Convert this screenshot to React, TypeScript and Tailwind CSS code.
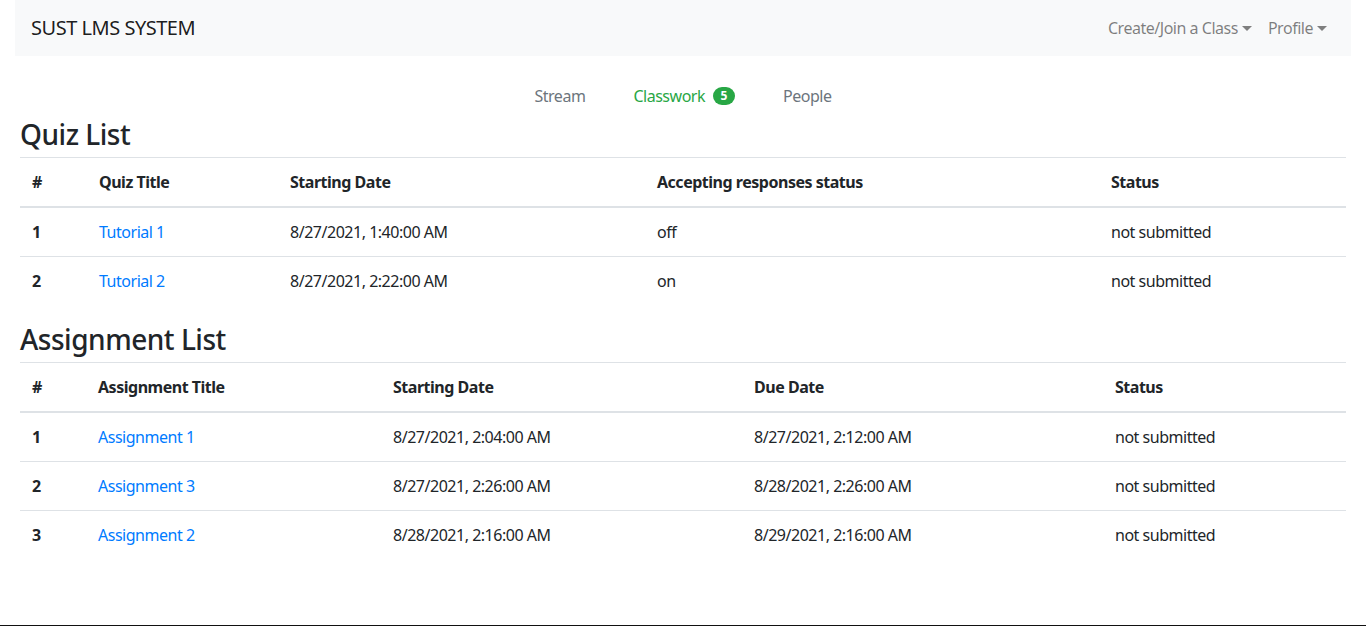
import React from 'react';

const quizzes = [
  { id: 1, title: 'Tutorial 1', start: '8/27/2021, 1:40:00 AM', accepting: 'off', status: 'not submitted' },
  { id: 2, title: 'Tutorial 2', start: '8/27/2021, 2:22:00 AM', accepting: 'on', status: 'not submitted' },
];

const assignments = [
  { id: 1, title: 'Assignment 1', start: '8/27/2021, 2:04:00 AM', due: '8/27/2021, 2:12:00 AM', status: 'not submitted' },
  { id: 2, title: 'Assignment 3', start: '8/27/2021, 2:26:00 AM', due: '8/28/2021, 2:26:00 AM', status: 'not submitted' },
  { id: 3, title: 'Assignment 2', start: '8/28/2021, 2:16:00 AM', due: '8/29/2021, 2:16:00 AM', status: 'not submitted' },
];

const Caret = () => (
  <span className="inline-block ml-[4px] align-[3px] w-0 h-0 border-x-[5px] border-x-transparent border-t-[5px] border-t-[#7f7f7f]" />
);

const th = 'px-3 py-3 text-left font-bold border-b-2 border-[#dee2e6] align-bottom';
const td = 'px-3 py-3 border-t border-[#dee2e6]';

export default function App() {
  return (
    <div
      className="h-[626px] flex flex-col bg-white text-[#212529] text-base leading-6 tracking-[-0.03em]"
      style={{ fontFamily: '"Segoe UI", "Noto Sans", "Open Sans", sans-serif' }}
    >
      <div className="flex-1 px-[15px]">
        {/* Navbar */}
        <nav className="h-[56px] bg-[#f8f9fa] flex items-center justify-between px-4">
          <a className="text-[20px] leading-[30px] text-[rgba(0,0,0,0.9)]">SUST LMS SYSTEM</a>
          <div className="flex items-center text-[rgba(0,0,0,0.5)]">
            <a className="px-2 py-2">
              Create/Join a Class
              <Caret />
            </a>
            <a className="px-2 py-2">
              Profile
              <Caret />
            </a>
          </div>
        </nav>

        {/* Tabs */}
        <div className="flex justify-center mt-5">
          <a className="px-6 py-2 text-[#6c757d]">Stream</a>
          <a className="px-6 py-2 text-[#28a745] flex items-center">
            Classwork
            <span className="ml-2 inline-flex items-center justify-center rounded-full bg-[#28a745] text-white text-[12px] font-bold leading-none tracking-normal w-[22px] h-[18px]">
              5
            </span>
          </a>
          <a className="px-6 py-2 text-[#6c757d]">People</a>
        </div>

        <div className="px-[5px]">
          <h3 className="text-[28px] leading-[34px] font-medium mt-[1px] mb-[6px]">Quiz List</h3>
          <table className="w-full border-collapse mb-[17px]">
            <thead>
              <tr>
                <th className={`${th} border-t w-[67px]`}>#</th>
                <th className={`${th} border-t w-[191px]`}>Quiz Title</th>
                <th className={`${th} border-t w-[367px]`}>Starting Date</th>
                <th className={`${th} border-t w-[454px]`}>Accepting responses status</th>
                <th className={`${th} border-t`}>Status</th>
              </tr>
            </thead>
            <tbody>
              {quizzes.map((q, i) => (
                <tr key={q.id}>
                  <td className={`${td} font-bold ${i === 0 ? 'border-t-0' : ''}`}>{q.id}</td>
                  <td className={`${td} ${i === 0 ? 'border-t-0' : ''}`}>
                    <a className="text-[#007bff]">{q.title}</a>
                  </td>
                  <td className={`${td} ${i === 0 ? 'border-t-0' : ''}`}>{q.start}</td>
                  <td className={`${td} ${i === 0 ? 'border-t-0' : ''}`}>{q.accepting}</td>
                  <td className={`${td} ${i === 0 ? 'border-t-0' : ''}`}>{q.status}</td>
                </tr>
              ))}
            </tbody>
          </table>

          <h3 className="text-[28px] leading-[34px] font-medium mb-[6px]">Assignment List</h3>
          <table className="w-full border-collapse mb-4">
            <thead>
              <tr>
                <th className={`${th} border-t w-[66px]`}>#</th>
                <th className={`${th} border-t w-[295px]`}>Assignment Title</th>
                <th className={`${th} border-t w-[361px]`}>Starting Date</th>
                <th className={`${th} border-t w-[361px]`}>Due Date</th>
                <th className={`${th} border-t`}>Status</th>
              </tr>
            </thead>
            <tbody>
              {assignments.map((a, i) => (
                <tr key={a.id}>
                  <td className={`${td} font-bold ${i === 0 ? 'border-t-0' : ''}`}>{a.id}</td>
                  <td className={`${td} ${i === 0 ? 'border-t-0' : ''}`}>
                    <a className="text-[#007bff]">{a.title}</a>
                  </td>
                  <td className={`${td} ${i === 0 ? 'border-t-0' : ''}`}>{a.start}</td>
                  <td className={`${td} ${i === 0 ? 'border-t-0' : ''}`}>{a.due}</td>
                  <td className={`${td} ${i === 0 ? 'border-t-0' : ''}`}>{a.status}</td>
                </tr>
              ))}
            </tbody>
          </table>
        </div>
      </div>
      <div className="h-px bg-[#111]" />
    </div>
  );
}
